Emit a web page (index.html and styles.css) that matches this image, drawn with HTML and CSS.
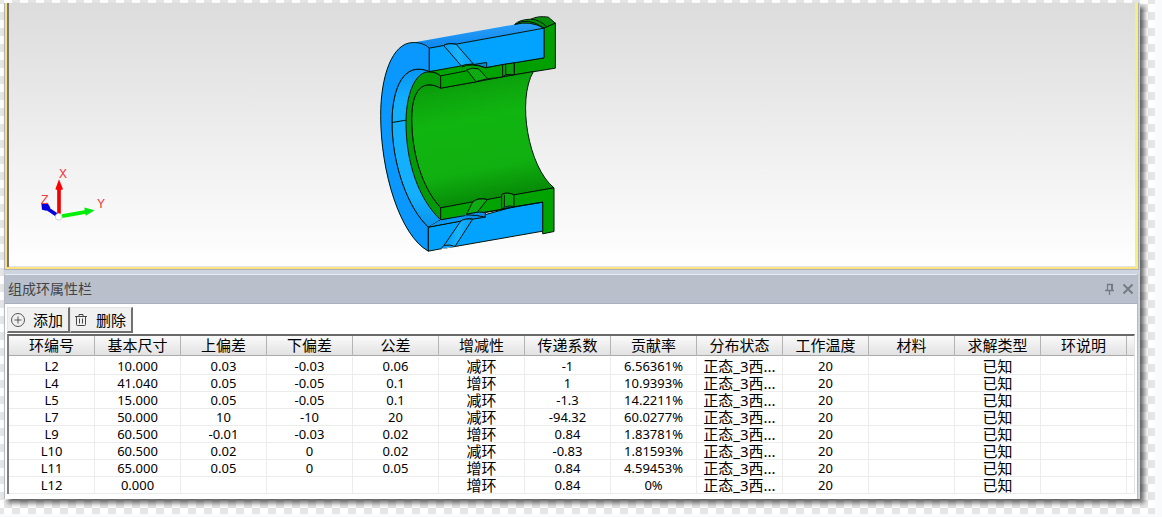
FILE: index.html
```html
<!DOCTYPE html>
<html lang="zh-CN">
<head>
<meta charset="utf-8">
<title>组成环属性栏</title>
<link rel="stylesheet" href="styles.css">
</head>
<body>
<div class="sheet">
<main class="window">
  <section class="viewport" aria-label="三维视图">
    <svg class="scene" width="560" height="263" viewBox="27 9 1680 789" role="img" aria-label="模型">
      <defs>
        <linearGradient id="bore" x1="0" y1="0" x2="0.2" y2="1">
          <stop offset="0" stop-color="#078a07"/><stop offset="0.2" stop-color="#0ca40c"/><stop offset="0.42" stop-color="#10b510"/><stop offset="0.78" stop-color="#10b010"/><stop offset="1" stop-color="#078c07"/>
        </linearGradient>
        <linearGradient id="shell" x1="0" y1="0" x2="0.1" y2="1">
          <stop offset="0" stop-color="#2ca2f8"/><stop offset="1" stop-color="#0c86ee"/>
        </linearGradient>
        <linearGradient id="inner" x1="0" y1="0" x2="0" y2="1">
          <stop offset="0" stop-color="#0896f4"/><stop offset="0.2" stop-color="#14aeff"/><stop offset="0.8" stop-color="#14b0ff"/><stop offset="1" stop-color="#0894ee"/>
        </linearGradient>
        <linearGradient id="slot" x1="0" y1="0" x2="1" y2="0">
          <stop offset="0" stop-color="#0a9cf8"/><stop offset="0.5" stop-color="#18b4ff"/><stop offset="1" stop-color="#089cf4"/>
        </linearGradient>
      </defs>
      <g transform="translate(1110 15)" stroke="#001408" stroke-width="3" stroke-linejoin="round" fill="none">
        <path fill="#078d07" d="M434 57Q448 42 483 41Q505 30 535 35L556 53L522 68L434 66Z"/>
        <path d="M434 57Q475 33 522 68M483 41Q510 43 530 64"/>
        <path stroke="none" fill="url(#shell)" d="M130 111L434 57Q480 44 522 68L258 116L178 129Z"/>
        <path d="M434 57Q480 44 522 68"/>
        <path fill="#00a000" d="M556 53V188L433 208L398 214L398 177L522 157V68Z"/>
        <path fill="url(#inner)" d="M178 198C100 165 66 250 66 350C66 480 115 610 175 665L212 643V205Z"/>
        <path fill="#0a98ff" d="M178 128C165 116 150 111 130 111C65 111 32 215 32 330C32 500 90 690 175 737V665C115 610 66 480 66 350C66 250 100 165 178 198Z"/>
        <path d="M66 351L108 344"/>
        <path fill="#02a3ff" d="M178 128L221 120Q232 112 258 116L522 68V157L350 186L178 198Z"/>
        <path fill="url(#slot)" d="M221 120Q232 112 258 116L310 175L274 181Z"/>
        <path fill="#078ccf" d="M310 177L350 171V188Z"/>
        <path fill="url(#bore)" d="M212 248L433 208L490 198C440 285 475 485 552 547L430 569L212 607C150 540 125 430 125 340C125 250 160 220 212 248Z"/>
        <path fill="#049a08" d="M212 211C145 165 108 255 108 350C108 470 145 580 212 643V607C150 540 125 430 125 340C125 250 160 220 212 248Z"/>
        <path fill="#00a300" d="M175 199L274 181Q302 169 348 187L398 177V214L353 220L318 229L212 248V211C200 201 190 199 175 199Z"/>
        <path d="M212 211L290 196M275 185Q301 171 348 187"/>
        <path fill="#0eab12" d="M290 193Q307 185 326 190L353 220L318 228Z"/>
        <path fill="#0c9e0e" d="M398 177L433 172V208L407 207L398 214Z"/>
        <path d="M407 176V207M433 174V208"/>
        <path fill="#00a300" d="M212 607L308 589L325 580Q338 578 352 582L395 574V567Q412 558 432 568L552 547V678L518 685V590L330 624L212 643Z"/>
        <path fill="#02a3ff" d="M175 665L290 643L430 604L518 590V677L255 723L212 730L175 737Z"/>
        <path fill="#0a9af6" stroke="none" d="M177 663L214 643L290 627L346 618V635L270 647Z"/>
        <path d="M212 643L518 590M175 665L272 647"/>
        <path fill="#0c8ee8" d="M288 628Q310 616 346 621L346 635L308 641Q298 637 272 646M288 628Q320 628 346 635"/>
        <path fill="#0eab12" d="M308 589Q324 576 352 582L322 620L290 626Z"/>
        <path fill="url(#slot)" d="M272 647Q283 638 308 641L255 723L222 720Z"/>
        <path fill="#fff" stroke="none" d="M213 731L222 720Q240 716 255 723Z"/>
        <path fill="#0aa0ff" d="M212 730L222 720Q240 716 255 723"/>
        <path fill="#0ba70c" d="M395 574V567Q412 558 432 568V604L395 610Z"/>
        <path fill="#12aaf8" d="M397 610Q410 598 430 603Z"/>
        <path d="M403 568V604"/>
      </g>
      <g transform="translate(0 450)">
        <path d="M176 197L136 170" stroke="#0000d8" stroke-width="11"/>
        <path d="M124 159L142 157L151 171L139 181L126 178Z" fill="#0000e0"/>
        <path d="M177 190V110" stroke="#f00000" stroke-width="11"/>
        <path d="M177 86L166 116Q177 121 189 116Z" fill="#ff0000"/>
        <path d="M186 197L258 184" stroke="#00f000" stroke-width="11"/>
        <path d="M284 179L253 171L257 196Z" fill="#00e810"/>
        <circle cx="176" cy="199" r="10" fill="#fff" stroke="#bbb" stroke-width="2"/>
        <g class="axis-name"><text x="177" y="82">X</text><text x="291" y="171">Y</text><text x="122" y="160">Z</text></g>
      </g>
    </svg>
  </section>

  <section class="panel">
    <header class="panel-title">
      <h1>组成环属性栏</h1>
      <button class="tool" type="button" aria-label="固定"><svg width="12" height="12" viewBox="0 0 12 12" fill="none" stroke="#777b82"><path d="M3 1.500h6M3.500 1.500v6M1 7.500h9M5.500 8v4" stroke-width="1.300"/><path d="M8 1v7" stroke-width="2"/></svg></button>
      <button class="tool" type="button" aria-label="关闭"><svg width="12" height="12" viewBox="0 0 12 12" stroke="#777b82" stroke-width="2"><path d="M1.500 1.500l9 9M10.500 1.500l-9 9"/></svg></button>
    </header>
    <div class="panel-body">
      <div class="toolbar">
        <button class="action" type="button"><svg width="16" height="16" viewBox="0 0 16 16" fill="none" stroke="#555"><circle cx="8" cy="8" r="6.500"/><path d="M4.500 8h7M8 4.500v7"/></svg>添加</button>
        <button class="action" type="button"><svg width="16" height="16" viewBox="0 0 16 16" fill="none" stroke="#444"><path d="M2 4.500h12M6 4V2.500h4V4M3.500 4.500v8q0 1 1 1h7q1 0 1-1v-8M6.500 6.500v5M9.500 6.500v5"/></svg>删除</button>
      </div>
      <table class="grid">
        <colgroup><col class="c" span="13"><col></colgroup>
        <thead><tr><th>环编号</th><th>基本尺寸</th><th>上偏差</th><th>下偏差</th><th>公差</th><th>增减性</th><th>传递系数</th><th>贡献率</th><th>分布状态</th><th>工作温度</th><th>材料</th><th>求解类型</th><th>环说明</th><th></th></tr></thead>
        <tbody>
        <tr><td>L2</td><td>10.000</td><td>0.03</td><td>-0.03</td><td>0.06</td><td class="zh">减环</td><td>-1</td><td>6.56361%</td><td class="zh">正态_3西...</td><td>20</td><td></td><td class="zh">已知</td><td></td><td></td></tr>
        <tr><td>L4</td><td>41.040</td><td>0.05</td><td>-0.05</td><td>0.1</td><td class="zh">增环</td><td>1</td><td>10.9393%</td><td class="zh">正态_3西...</td><td>20</td><td></td><td class="zh">已知</td><td></td><td></td></tr>
        <tr><td>L5</td><td>15.000</td><td>0.05</td><td>-0.05</td><td>0.1</td><td class="zh">减环</td><td>-1.3</td><td>14.2211%</td><td class="zh">正态_3西...</td><td>20</td><td></td><td class="zh">已知</td><td></td><td></td></tr>
        <tr><td>L7</td><td>50.000</td><td>10</td><td>-10</td><td>20</td><td class="zh">减环</td><td>-94.32</td><td>60.0277%</td><td class="zh">正态_3西...</td><td>20</td><td></td><td class="zh">已知</td><td></td><td></td></tr>
        <tr><td>L9</td><td>60.500</td><td>-0.01</td><td>-0.03</td><td>0.02</td><td class="zh">增环</td><td>0.84</td><td>1.83781%</td><td class="zh">正态_3西...</td><td>20</td><td></td><td class="zh">已知</td><td></td><td></td></tr>
        <tr><td>L10</td><td>60.500</td><td>0.02</td><td>0</td><td>0.02</td><td class="zh">减环</td><td>-0.83</td><td>1.81593%</td><td class="zh">正态_3西...</td><td>20</td><td></td><td class="zh">已知</td><td></td><td></td></tr>
        <tr><td>L11</td><td>65.000</td><td>0.05</td><td>0</td><td>0.05</td><td class="zh">增环</td><td>0.84</td><td>4.59453%</td><td class="zh">正态_3西...</td><td>20</td><td></td><td class="zh">已知</td><td></td><td></td></tr>
        <tr><td>L12</td><td>0.000</td><td></td><td></td><td></td><td class="zh">增环</td><td>0.84</td><td>0%</td><td class="zh">正态_3西...</td><td>20</td><td></td><td class="zh">已知</td><td></td><td></td></tr>
        </tbody>
      </table>
    </div>
  </section>
</main>
</div>
</body>
</html>
```
FILE: styles.css
```css
* { box-sizing: border-box; }
body {
  margin: 0;
  min-height: 100vh;
  display: flex;
  padding: 0 7px 3px 0;
  background: #f9fafc;
  color: #000;
  font: 13px/16px "Noto Sans", "Noto Sans CJK SC", sans-serif;
}
.sheet {
  flex: 1;
  min-width: 0;
  display: flex;
  padding: 3px 15px 15px 4px;
  background: conic-gradient(#fff 25%, #e6e6e6 0 50%, #fff 0 75%, #e6e6e6 0) 4px 4px / 16px 16px;
}
.window {
  flex: 1;
  min-width: 0;
  display: flex;
  flex-direction: column;
  background: #ced4de;
  box-shadow: 4px 4px 5px rgba(0, 0, 0, 0.6);
}
.viewport {
  margin: 0 2px 5px 1px;
  border: solid #fde27c;
  border-width: 0 2px 2px;
  border-right-color: #f8f07a;
  outline: 1px solid #a9b0bf;
  clip-path: inset(0 -1px -1px -1px);
  background: linear-gradient(#dcdcdc, #fff);
  box-shadow: inset 2px 0 #777, inset -1px -1px #e0e4ec;
}
.scene {
  display: block;
  width: 560px;
  height: 264px;
  margin-left: 2px;
}
.axis-name {
  font: 40px "Liberation Mono", monospace;
  fill: #f04040;
}
.panel {
  flex: 1;
  display: flex;
  flex-direction: column;
  margin: 0 2px 0 0;
  border: solid #b3bac8;
  border-width: 0 1px;
}
.panel-title {
  height: 30px;
  display: flex;
  align-items: center;
  gap: 6px;
  padding: 0 3px;
  background: #b9c0cb;
  border-top: 1px solid #e9edf4;
  border-bottom: 1px solid #aab0be;
}
.panel-title h1 {
  flex: 1;
  margin: 0;
  padding-bottom: 2px;
  color: #444;
  font: 14px/20px "Noto Sans CJK SC", sans-serif;
}
.tool {
  width: 12px;
  height: 12px;
  padding: 0;
  border: 0;
  background: none;
}
.tool svg { display: block; }
.panel-body {
  flex: 1;
  padding: 3px 2px 0;
  background: #fff;
}
.toolbar {
  display: flex;
  padding-bottom: 1px;
}
.action {
  height: 26px;
  display: flex;
  align-items: center;
  gap: 7px;
  padding: 0 5px 0 2px;
  border: solid;
  border-width: 1px 2px 2px 1px;
  border-color: #e3e3e3 #707070 #707070 #e3e3e3;
  background: #f0f0f0;
  color: #000;
  font: 15px/20px "Noto Sans CJK SC", sans-serif;
}
.grid {
  width: 100%;
  table-layout: fixed;
  border-spacing: 0;
  border-top: 2px solid #696969;
  border-left: 2px solid #808080;
  border-right: 1px solid #e3e3e3;
  text-align: center;
  white-space: nowrap;
}
.c { width: 86px; }
.grid th {
  height: 20px;
  padding: 0 0 2px;
  border-right: 1px solid #b4b4b4;
  border-bottom: 1px solid #aaa;
  background: linear-gradient(#fafafa, #e2e2e2);
  font: 15px/17px "Noto Sans CJK SC", sans-serif;
}
.grid th:last-child { border-right: 0; }
.grid td {
  height: 17px;
  padding: 0;
  border-right: 1px solid #ececec;
  border-bottom: 1px solid #ececec;
}
.grid tbody tr:first-child td {
  height: 19px;
  border-top: 2px solid #fff;
}
.grid td:last-child { border-right: 0; }
.grid .zh {
  font: 15px/16px "Noto Sans", "Noto Sans CJK SC", sans-serif;
}
```
